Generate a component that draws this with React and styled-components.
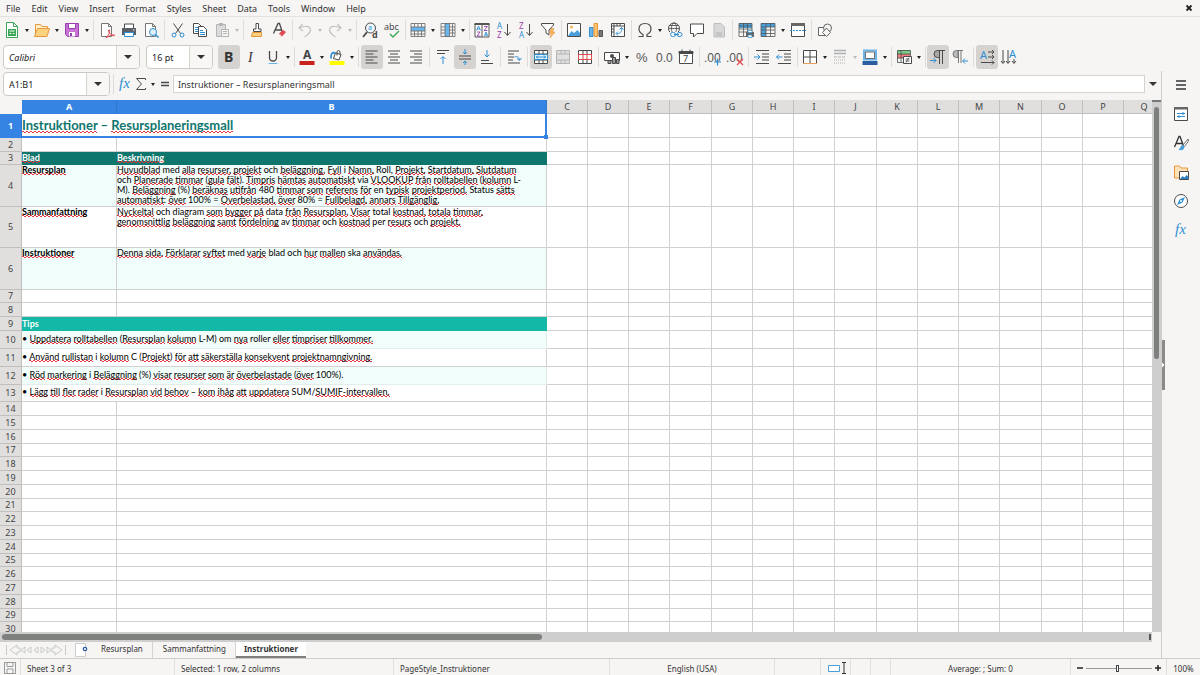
import React from "react";
import styled, { createGlobalStyle } from "styled-components";

const INK = "#4a4a4a";
const BLUE = "#2f8fd3";

// every drawing lives in an 18 x 18 box
const icons = {
  newDoc: (
    <>
      <path d="M3.5 1.5h7l4 4v11h-11z" fill="#fff" stroke="#3aa757" />
      <path d="M10.5 1.5v4h4" fill="none" stroke="#3aa757" />
      <path d="M5 8h8v7H5z" fill="#3aa757" />
      <path d="M6.5 10h5M6.5 12.5h2M10 12.5h1.5" stroke="#fff" />
    </>
  ),
  open: (
    <>
      <path d="M2.5 15V3.5h5l1.5 2h5.5V8" fill="#fff1c9" stroke="#e8963c" />
      <path d="M1.5 15.5L4.5 7.5h12l-2.5 8z" fill="#fbd37f" stroke="#e8963c" />
    </>
  ),
  save: (
    <>
      <path d="M2.5 2.5h13v13h-11l-2-2z" fill="#c774d4" stroke="#9a3fae" />
      <path d="M5.5 2.5h7v5h-7z" fill="#fff" stroke="#9a3fae" />
      <path d="M6 11h6v4.5H6z" fill="#fff" />
      <path d="M7 12h2v3H7z" fill="#9a3fae" />
    </>
  ),
  pdf: (
    <>
      <path d="M3.5 2.5h7l3 3v10h-10z" fill="#fff" stroke="#777" />
      <path d="M10.5 2.5v3h3" fill="none" stroke="#777" />
      <path d="M8 17c3-3 4-6 3.5-8-1-1-1.5 1 0 3s4 3.500 5 2.500-3-1.500-8.500 2.500z" fill="none" stroke="#e0484d" />
    </>
  ),
  print: (
    <>
      <path d="M4.5 7V3h9v4" fill="#fff" stroke={INK} />
      <path d="M2 7h14v7H2z" fill="#5b6068" />
      <path d="M4.5 11.5h9v4h-9z" fill="#fff" stroke={BLUE} />
      <path d="M13 9h1.5" stroke="#fff" />
    </>
  ),
  preview: (
    <>
      <path d="M3.5 2.5h7l3 3v10h-10z" fill="#fff" stroke="#777" />
      <path d="M10.5 2.5v3h3" fill="none" stroke="#777" />
      <circle cx="11" cy="11" r="3.5" fill="#dff0fb" stroke={BLUE} />
      <path d="M13.5 13.5l3 3" stroke={BLUE} strokeWidth="1.5" />
    </>
  ),
  cut: (
    <>
      <path d="M4.5 2.5l7 10M13.5 2.5l-7 10" stroke={INK} />
      <circle cx="5" cy="14" r="2" fill="none" stroke={BLUE} />
      <circle cx="13" cy="14" r="2" fill="none" stroke={BLUE} />
    </>
  ),
  copy: (
    <>
      <path d="M2.5 2.5h5l2.5 2.5v7.5H2.5z" fill="#fff" stroke={INK} />
      <path d="M7.5 5.5h5l3 3v7h-8z" fill="#fff" stroke={INK} />
      <path d="M4 6.5h3M4 8.5h3M4 10.5h3M9 9.5h3M9 11.5h5M9 13.5h5" stroke={BLUE} />
    </>
  ),
  paste: (
    <>
      <path d="M3.5 3.5h9v12h-9z" fill="#dcdcdc" stroke="#b5b5b5" />
      <path d="M6 2h4v3H6z" fill="#b5b5b5" />
      <path d="M8.5 8.5h7v7h-7z" fill="#f4f4f4" stroke="#b5b5b5" />
      <path d="M10 10.5h4M10 12.5h4" stroke="#b5b5b5" />
    </>
  ),
  brush: (
    <>
      <path d="M8 2.5h2.5V8H13v2.5H5.5V8H8z" fill="#fff" stroke={INK} />
      <path d="M4.5 11.5h9v4h-10z" fill="#fbd37f" stroke="#e8963c" />
    </>
  ),
  clear: (
    <>
      <path d="M3.5 12.5L8 2.5h1.5l3 9M5.5 9h6" fill="none" stroke={INK} strokeWidth="1.3" />
      <path d="M9 12.5l4-3.5 3 2-4 4.5z" fill="#e0484d" />
      <path d="M9 12.5l3 3" stroke="#f6a6a6" />
    </>
  ),
  undo: <path d="M6.5 3L3 7l4 3M3.5 7c6-3 11-2 11 2s-4 5-6 7" fill="none" stroke="#c3c3c3" strokeWidth="1.2" />,
  redo: <path d="M11.5 3L15 7l-4 3M14.5 7c-6-3-11-2-11 2s4 5 6 7" fill="none" stroke="#c3c3c3" strokeWidth="1.2" />,
  find: (
    <>
      <circle cx="9.5" cy="7" r="5" fill="#eef7fd" stroke={INK} />
      <path d="M6 11l-4 5" stroke={INK} strokeWidth="1.8" />
      <text x="7" y="9" fontSize="7" fill={BLUE}>a</text>
      <text x="11" y="16.5" fontSize="9" fontWeight="bold" fill={INK}>d</text>
    </>
  ),
  spell: (
    <>
      <text x="1" y="9" fontSize="9" fill={INK}>abc</text>
      <path d="M7 13l3 3 6-6" fill="none" stroke="#3aa757" strokeWidth="1.4" />
    </>
  ),
  rows: (
    <>
      <path d="M2 6h14v4H2z" fill="#6bb5ea" />
      <path d="M2 2.5h14v13H2zM2 6h14M2 10h14M2 13h14M5.5 2.5v3.5M9 2.5v3.5M12.5 2.5v3.5M5.5 10v5.5M9 10v5.5M12.5 10v5.5" fill="none" stroke="#666" strokeWidth="0.8" />
    </>
  ),
  cols: (
    <>
      <path d="M6 2h4.5v14H6z" fill="#6bb5ea" />
      <path d="M2 2.5h14v13H2zM6 2.5v13M10.5 2.5v13M13.5 2.5v13M2 6h4M2 9h4M2 12h4M10.5 6H16M10.5 9H16M10.5 12H16" fill="none" stroke="#666" strokeWidth="0.8" />
    </>
  ),
  sort: (
    <>
      <path d="M2 3h14v13H2zM9 3v13" fill="#fff" stroke="#555" />
      <path d="M1.5 2h15v2h-15z" fill="#555" />
      <path d="M3.5 9.5l2-4.500 2 4.500M4 8h3M11.500 15l1.500-4 1.500 4M12 14h2.500" fill="none" stroke={BLUE} strokeWidth="0.9" />
      <path d="M4 11h3l-3 4h3.500M11 5.500h3.500l-3.500 4h3.500" fill="none" stroke="#9a3fae" strokeWidth="0.9" />
    </>
  ),
  asc: (
    <>
      <text x="2" y="8" fontSize="8" fill={BLUE}>A</text>
      <text x="2" y="17" fontSize="8" fill="#9a3fae">Z</text>
      <path d="M12.5 3v11M9.5 11l3 3.5 3-3.5" fill="none" stroke={INK} />
    </>
  ),
  desc: (
    <>
      <text x="2" y="8" fontSize="8" fill="#9a3fae">Z</text>
      <text x="2" y="17" fontSize="8" fill={BLUE}>A</text>
      <path d="M12.5 3v11M9.5 11l3 3.5 3-3.5" fill="none" stroke={INK} />
    </>
  ),
  filter: (
    <>
      <path d="M2.5 2.5h12v1.5L10 9v5l-3-2V9L2.5 4z" fill="#fff" stroke={INK} />
      <path d="M12 7.5h3L13.5 11H16l-5 6 1.5-4.5h-2z" fill="#f6b35b" stroke="#e8963c" strokeWidth="0.6" />
    </>
  ),
  image: (
    <>
      <path d="M2.5 2.5h13v13h-13z" fill="#fff" stroke={INK} />
      <path d="M3 15l3.5-5 2.5 2 3.5-3 2.5 3v3z" fill="#4a9fdb" />
      <circle cx="6.5" cy="6" r="1.5" fill="#f6b35b" />
    </>
  ),
  chart: (
    <>
      <path d="M2.5 6.5H6v9H2.5z" fill="#6bb5ea" stroke={BLUE} />
      <path d="M7 2.5h3.5v13H7z" fill="#fbc36b" stroke="#e8963c" />
      <path d="M12 9.5h3.5v6H12z" fill="#777" stroke="#555" />
    </>
  ),
  pivot: (
    <>
      <path d="M2.5 2.5h13v13h-13z" fill="#fff" stroke={INK} />
      <path d="M2.5 5h13M5 2.5v13M8 2.5V5M11 2.5V5M2.5 8H5M2.5 11H5" stroke={INK} />
      <path d="M12.5 7c1 4-2 6-5 5.5M10.5 8.5l2-2 2 2M9 10.5l-2 2 2 2" fill="none" stroke={BLUE} />
    </>
  ),
  omega: (
    <path d="M2.5 15.5H7v-2C4 12 3 10 3 8c0-3.5 2.5-5.5 6-5.5s6 2 6 5.5c0 2-1 4-4 5.5v2h4.5" fill="none" stroke={INK} strokeWidth="1.2" />
  ),
  link: (
    <>
      <circle cx="8" cy="7.5" r="5.5" fill="none" stroke={INK} />
      <ellipse cx="8" cy="7.5" rx="2.5" ry="5.5" fill="none" stroke={INK} strokeWidth="0.8" />
      <path d="M2.5 7.5h11M3.5 4.5h9" stroke={INK} strokeWidth="0.8" />
      <path d="M4 11h13v5H4z" fill="#f6f5f4" />
      <rect x="4.5" y="11.5" width="5" height="4" rx="2" fill="none" stroke={BLUE} />
      <rect x="11" y="11.5" width="5" height="4" rx="2" fill="none" stroke={BLUE} />
      <path d="M8 13.5h5" stroke={BLUE} />
    </>
  ),
  comment: <path d="M2.5 3h13v9.5H9L5.5 16v-3.5h-3z" fill="#fff" stroke={INK} />,
  page: (
    <>
      <path d="M4 2.5h7l3.5 3.5v10H4z" fill="#d8d8d8" stroke="#bdbdbd" />
      <path d="M6 12h6M6 14h6" stroke="#b2b2b2" />
    </>
  ),
  printArea: (
    <>
      <path d="M2 2h13v5H2z" fill="#4a9fdb" />
      <path d="M2 2.5h13v13H2zM2 5h13M2 8h13M2 11h13M6.5 2v13M10.5 2v13" fill="none" stroke="#555" strokeWidth="0.8" />
      <path d="M9 11h8v5H9z" fill="#666" />
      <path d="M11 9.5h4v2h-4zM11 14h4v2.5h-4z" fill="#fff" stroke={BLUE} strokeWidth="0.7" />
    </>
  ),
  freeze: (
    <>
      <path d="M2 2h14v4H7v10H2z" fill="#4a9fdb" />
      <path d="M2 2.5h14v13H2zM2 6h14M7 2v14M2 9h14M2 12.5h14M11.5 2v14" fill="none" stroke="#555" strokeWidth="0.8" />
    </>
  ),
  split: (
    <>
      <path d="M2.5 2.5h13v13h-13z" fill="#fff" stroke={INK} />
      <path d="M2 2h14v3H2z" fill="#666" />
      <path d="M1 9.5h16" stroke={BLUE} strokeDasharray="2 1" />
    </>
  ),
  shapes: (
    <>
      <path d="M2.5 6.5h7v8h-7z" fill="#fff" stroke="#666" />
      <circle cx="11.5" cy="7" r="4" fill="#f6f5f4" stroke="#666" />
      <path d="M10.5 7l4 4.5-4 4-4-4z" fill="#f6f5f4" stroke="#666" />
    </>
  ),
  bold: <text x="4" y="14" fontSize="14" fontWeight="bold" fill="#333">B</text>,
  italic: <text x="6" y="14" fontSize="14" fontStyle="italic" fontFamily="Liberation Serif, serif" fill="#333">I</text>,
  underline: (
    <>
      <path d="M5.5 3v6.5q0 3.5 3.5 3.5t3.5-3.5V3" fill="none" stroke={INK} strokeWidth="1.3" />
      <path d="M4.5 15.5h9" stroke="#6bb5ea" />
    </>
  ),
  fontColor: (
    <>
      <text x="5" y="11" fontSize="12" fontWeight="bold" fill="#444">A</text>
      <path d="M1.5 13h15v4h-15z" fill="#c9211e" />
    </>
  ),
  highlight: (
    <>
      <path d="M7.5 5l5.500 1.500-2 5.500-5.500-1.500z" fill="#fff" stroke={INK} />
      <path d="M9 7.500V3.500q1.500-2 3 0v3" fill="none" stroke={INK} />
      <path d="M7.500 5C4 4 2.500 6 3 10.500" fill="none" stroke={BLUE} strokeWidth="1.800" />
      <path d="M1.5 13h15v4h-15z" fill="#ffff00" />
    </>
  ),
  alignLeft: <path d="M2.5 3h12M2.5 6h8M2.5 9h12M2.5 12h8M2.5 15h12" stroke={INK} />,
  alignCenter: <path d="M3 3h12M5 6h8M3 9h12M5 12h8M3 15h12" stroke={INK} />,
  alignRight: <path d="M3 3h12M7 6h8M3 9h12M7 12h8M3 15h12" stroke={INK} />,
  alignTop: (
    <>
      <path d="M3 2.5h12M3 5.5h8" stroke={INK} />
      <path d="M9 16V9M6.5 11L9 8.5l2.5 2.5" fill="none" stroke={BLUE} />
    </>
  ),
  alignMiddle: (
    <>
      <path d="M3 8h12M3 11h12" stroke={INK} />
      <path d="M9 1v5M7 4l2 2 2-2M9 17v-4M7 15l2-2 2 2" fill="none" stroke={BLUE} />
    </>
  ),
  alignBottom: (
    <>
      <path d="M3 12.5h8M3 15.5h12" stroke={INK} />
      <path d="M9 2v7M6.5 6.5L9 9l2.5-2.5" fill="none" stroke={BLUE} />
    </>
  ),
  wrap: (
    <>
      <path d="M3 3h11M3 6h6M3 9h6M3 12h5M3 15h12" stroke={INK} />
      <path d="M9.5 9c3-1 4.5 0 5 3M12 10.5l2.5 2 2-2.5" fill="none" stroke={BLUE} />
    </>
  ),
  mergeCenter: (
    <>
      <path d="M2.5 2.5h13v13h-13zM2 6h14M2 12h14M7 2.5V6M11 2.5V6M7 12v3.5M11 12v3.5" fill="#fff" stroke={INK} />
      <path d="M2.5 6.5h13v5h-13z" fill="#e5f3fc" stroke={BLUE} />
      <path d="M4 9h10M6 7.5L4.5 9 6 10.5M12 7.5L13.5 9 12 10.5" fill="none" stroke={BLUE} />
    </>
  ),
  merge: (
    <path d="M2.5 2.5h13v13h-13zM2 6h14M2 12h14M7 2.5V6M11 2.5V6M7 12v3.5M11 12v3.5" fill="#e0e0e0" stroke="#b5b5b5" />
  ),
  unmerge: (
    <>
      <path d="M2.5 2.5h13v13h-13zM7 2.5v13M11 2.5v13" fill="#fff" stroke={INK} />
      <path d="M2.5 6.5h13v5h-13zM7 6.5v5M11 6.5v5" fill="#fff" stroke="#e0484d" />
    </>
  ),
  currency: (
    <>
      <path d="M1.500 4.500h15v8h-15z" fill="#fff" stroke={INK} />
      <circle cx="9" cy="8" r="2" fill={INK} />
      <path d="M5 12.500h3v3H5zM9.500 9.500h3v6h-3zM13.500 11.500H16v4h-2.500z" fill="#999" stroke={INK} />
    </>
  ),
  percent: <text x="3" y="14" fontSize="13" fontFamily="Liberation Sans, sans-serif" fill="#555">%</text>,
  number: <text x="1" y="14" fontSize="12" fontFamily="Liberation Sans, sans-serif" fill="#555">0.0</text>,
  date: (
    <>
      <path d="M2.5 3.5h13v12h-13z" fill="#fff" stroke={INK} />
      <path d="M2 3.5h14v2H2zM5 1.5v3M13 1.5v3" fill={INK} stroke={INK} />
      <text x="6" y="14" fontSize="9" fill="#444">7</text>
    </>
  ),
  addDecimal: (
    <>
      <text x="0" y="14" fontSize="12" fontFamily="Liberation Sans, sans-serif" fill="#555">.00</text>
      <path d="M10 14h7M13.5 10.5v7" stroke={BLUE} strokeWidth="1.2" />
    </>
  ),
  delDecimal: (
    <>
      <text x="0" y="14" fontSize="12" fontFamily="Liberation Sans, sans-serif" fill="#555">.00</text>
      <path d="M11 11l6 6M17 11l-6 6" stroke="#e0484d" strokeWidth="1.2" />
    </>
  ),
  indent: (
    <>
      <path d="M3 2.5h13M9 6h7M9 9h7M9 12h7M3 15.5h13" stroke={INK} />
      <path d="M1 9h6M4.5 6.5L7 9l-2.5 2.5" fill="none" stroke={BLUE} />
    </>
  ),
  outdent: (
    <>
      <path d="M3 2.5h13M9 6h7M9 9h7M9 12h7M3 15.5h13" stroke={INK} />
      <path d="M7.5 9h-6M4 6.5L1.5 9 4 11.5" fill="none" stroke={BLUE} />
    </>
  ),
  borders: (
    <>
      <path d="M2.5 2.5h13v13h-13zM9 2.5v13M2.5 9h13" fill="#fff" stroke={INK} />
      <path d="M2 15.5h14" stroke="#e8a05c" />
    </>
  ),
  borderStyle: (
    <>
      <path d="M3 2.500h12M3 5.500h12" stroke="#b0b0b0" strokeWidth="1.500" />
      <path d="M3 9h12" stroke="#b0b0b0" strokeDasharray="3 1" />
      <path d="M3 12h12M3 15h12" stroke="#b0b0b0" strokeDasharray="1 1" />
    </>
  ),
  borderColor: (
    <>
      <path d="M3 2.500h12v9H3z" fill="#fff" stroke="#6bb5ea" strokeWidth="2" />
      <path d="M4.500 4h9v6.500h-9z" fill="#fff" stroke={INK} strokeWidth="0.800" />
      <path d="M1.5 13h15v4h-15z" fill="#2a5ea0" />
    </>
  ),
  conditional: (
    <>
      <path d="M2 2h13v4H2z" fill="#7ccf8a" />
      <path d="M2 6h13v4H2z" fill="#f08080" />
      <path d="M2.5 2.5h13v12h-13zM2 6h13M2 10h13M6 2v12" fill="none" stroke={INK} strokeWidth="0.8" />
      <path d="M8.5 8.5h8v7h-8z" fill="#fff" stroke={INK} />
      <path d="M10.5 11h4M10.5 13h4M14 9.5l-3 5" stroke={INK} strokeWidth="0.8" />
    </>
  ),
  ltr: (
    <>
      <path d="M10.500 2.500H8.500a3.500 3.500 0 0 0 0 7h2z" fill="#a9a7a4" stroke={INK} />
      <path d="M10 2.500h6M10.500 2.500v13.500M13.500 2.500v13.500" fill="none" stroke={INK} />
      <path d="M1 12.5h6M4.5 10L7 12.5 4.5 15" fill="none" stroke={BLUE} />
    </>
  ),
  rtl: (
    <>
      <path d="M7 2.500H5.500a3 3 0 0 0 0 7H7z" fill="#bbb" stroke="#777" />
      <path d="M7 2.500h5M7.500 2.500V15M10 2.500V15" fill="none" stroke="#777" />
      <path d="M17 13h-5M14 10.500L11.500 13l2.500 2.500" fill="none" stroke={BLUE} />
    </>
  ),
  textRight: (
    <>
      <text x="2" y="11" fontSize="11" fill={BLUE}>A</text>
      <path d="M10 4h6M14 2l2 2-2 2M10 9h6M14 7l2 2-2 2M3 14.5h13M14 12.5l2 2-2 2" fill="none" stroke={INK} />
    </>
  ),
  textDown: (
    <>
      <text x="9" y="10" fontSize="11" fill={BLUE}>A</text>
      <path d="M3 2v13M1 13l2 2.5L5 13M8 2v13M6 13l2 2.5 2-2.5M14 11v4M12 13l2 2.5 2-2.5" fill="none" stroke={INK} />
    </>
  ),
  fx: (
    <text x="3" y="13" fontSize="15" fontStyle="italic" fontFamily="Liberation Serif, serif" fill={BLUE}>
      fx
    </text>
  ),
  sum: <path d="M13.5 5V3.5h-9L9.5 9l-5 5.5h9V13" fill="none" stroke={INK} />,
  equals: <path d="M5 7.5h8M5 10.5h8" stroke={INK} strokeWidth="1.5" />,
  menu: <path d="M4 5h10M4 9h10M4 13h10" stroke="#333" strokeWidth="1.5" />,
  properties: (
    <>
      <path d="M2.5 2.5h13v13h-13z" fill="#fff" stroke={INK} />
      <path d="M2 2h14v2.5H2z" fill="#666" />
      <path d="M5 8.500h8M5 11.500h8M11 7v3M7 10v3" stroke={BLUE} />
    </>
  ),
  styles: (
    <>
      <path d="M2.5 13L7 2.5h1L11.5 12M4 9.5h6" fill="none" stroke="#333" strokeWidth="1.3" />
      <path d="M16 5l-5 6 1.5 1.5L16.5 7z" fill="#fff" stroke={INK} strokeWidth="0.8" />
      <path d="M11 11c-3 0-2 4-5 4.5 3 1.5 6 1 6.5-3z" fill="#4a9fdb" />
    </>
  ),
  gallery: (
    <>
      <path d="M2.5 15V3h5l1.5 2h6.5v10z" fill="#fde2b8" stroke="#e8963c" />
      <path d="M7.5 8.5h9v8h-9z" fill="#fff" stroke={INK} />
      <path d="M8 16l2.5-3 2 1.5 2-2.5 2 2v2z" fill="#2f7fc3" />
    </>
  ),
  navigator: (
    <>
      <circle cx="9" cy="9" r="6.5" fill="#fff" stroke={INK} />
      <path d="M13 5l-2.5 5.5L5 13l2.5-5.5z" fill={BLUE} />
      <circle cx="9" cy="9" r="1" fill="#fff" />
    </>
  ),
  saved: (
    <>
      <path d="M3.5 3.5h11v11h-11z" fill="#f6f6f6" stroke="#999" />
      <path d="M6 3.5v4h6v-4M6 14.5V10h6v4.5" fill="none" stroke="#999" />
    </>
  ),
};

// [icon, label, has a menu, state]; a number is a separator of that width
const mainTools = [
  ["newDoc", "New", true], ["open", "Open", true], ["save", "Save", true], 5,
  ["pdf", "Export PDF"], ["print", "Print"], ["preview", "Print preview"], 5,
  ["cut", "Cut"], ["copy", "Copy"], ["paste", "Paste", true, "off"], 5,
  ["brush", "Clone formatting"], ["clear", "Clear formatting"], 4,
  ["undo", "Undo", true, "off"], ["redo", "Redo", true, "off"], 5,
  ["find", "Find"], ["spell", "Spelling"], 4,
  ["rows", "Row", true], ["cols", "Column", true], 4,
  ["sort", "Sort"], ["asc", "Sort ascending"], ["desc", "Sort descending"], ["filter", "AutoFilter"], 4,
  ["image", "Image"], ["chart", "Chart"], ["pivot", "Pivot table"], 5,
  ["omega", "Special character", true], ["link", "Hyperlink"], ["comment", "Comment"], ["page", "Headers and footers"], 5,
  ["printArea", "Print area"], ["freeze", "Freeze", true], ["split", "Split window"], 5,
  ["shapes", "Draw functions"],
];

const formatTools = [
  ["bold", "Bold", false, "on"], ["italic", "Italic"], ["underline", "Underline", true], 4,
  ["fontColor", "Font colour", true], ["highlight", "Background colour", true], 5,
  ["alignLeft", "Align left", false, "on"], ["alignCenter", "Align centre"], ["alignRight", "Align right"], 5,
  ["alignTop", "Align top"], ["alignMiddle", "Centre vertically", false, "on"], ["alignBottom", "Align bottom"], 5,
  ["wrap", "Wrap text"], 5,
  ["mergeCenter", "Merge and centre", false, "on"], ["merge", "Merge"], ["unmerge", "Split cells"], 5,
  ["currency", "Currency", true], ["percent", "Percent"], ["number", "Number"], ["date", "Date"], 5,
  ["addDecimal", "Add decimal"], ["delDecimal", "Delete decimal"], 5,
  ["indent", "Increase indent"], ["outdent", "Decrease indent"], 4,
  ["borders", "Borders", true], ["borderStyle", "Border style", true, "off"], ["borderColor", "Border colour", true], 4,
  ["conditional", "Conditional", true], 4,
  ["ltr", "Left to right", false, "on"], ["rtl", "Right to left"], 5,
  ["textRight", "Text horizontal", false, "on"], ["textDown", "Text vertical"],
];

const sideTools = [
  ["menu", "Sidebar settings"],
  ["properties", "Properties"],
  ["styles", "Styles"],
  ["gallery", "Gallery"],
  ["navigator", "Navigator"],
  ["fx", "Functions"],
];

const menus = ["File", "Edit", "View", "Insert", "Format", "Styles", "Sheet", "Data", "Tools", "Window", "Help"];

const columns = "ABCDEFGHIJKLMNOPQ".split("");
const colWidth = (i) => (i === 0 ? 95 : i === 1 ? 430 : i % 4 === 1 ? 42 : 41);

// words between underscores get the spelling mark
const rows = {
  1: { h: 24, kind: "title", merged: "_Instruktioner_ – _Resursplaneringsmall_" },
  3: { h: 13, kind: "head", a: "_Blad_", b: ["_Beskrivning_"] },
  4: {
    h: 42,
    kind: "tint",
    a: "_Resursplan_",
    b: [
      "_Huvudblad_ med _alla_ _resurser,_ _projekt_ och _beläggning._ _Fyll_ i _Namn,_ Roll, _Projekt,_ _Startdatum,_ _Slutdatum_",
      "och _Planerade_ _timmar_ (_gula_ _fält_). _Timpris_ _hämtas_ _automatiskt_ via _VLOOKUP_ _från_ _rolltabellen_ (_kolumn_ L-",
      "M). _Beläggning_ (%) _beräknas_ _utifrån_ 480 _timmar_ _som_ _referens_ _för_ en _typisk_ _projektperiod._ Status _sätts_",
      "_automatiskt_: _över_ 100% = _Överbelastad,_ _över_ 80% = _Fullbelagd,_ _annars_ _Tillgänglig._",
    ],
  },
  5: {
    h: 41,
    kind: "plain",
    a: "_Sammanfattning_",
    b: [
      "_Nyckeltal_ och diagram _som_ _bygger_ _på_ data _från_ _Resursplan._ _Visar_ total _kostnad,_ _totala_ _timmar,_",
      "_genomsnittlig_ _beläggning_ _samt_ _fördelning_ av _timmar_ och _kostnad_ per _resurs_ och _projekt._",
    ],
  },
  6: {
    h: 42,
    kind: "tint",
    a: "_Instruktioner_",
    b: ["_Denna_ _sida._ _Förklarar_ _syftet_ med _varje_ blad och _hur_ _mallen_ ska _användas._"],
  },
  7: { h: 13 },
  9: { h: 14, kind: "tips", merged: "Tips" },
  10: { h: 18, kind: "tipTint", merged: "• _Uppdatera_ _rolltabellen_ (_Resursplan_ _kolumn_ L-M) om _nya_ roller _eller_ _timpriser_ _tillkommer._" },
  11: { h: 18, kind: "tip", merged: "• _Använd_ _rullistan_ i _kolumn_ C (_Projekt_) _för_ _att_ _säkerställa_ _konsekvent_ _projektnamngivning._" },
  12: { h: 18, kind: "tipTint", merged: "• _Röd_ _markering_ i _Beläggning_ (%) _visar_ _resurser_ _som_ _är_ _överbelastade_ (_över_ 100%)." },
  13: { h: 17, kind: "tip", merged: "• _Lägg_ _till_ _fler_ _rader_ i _Resursplan_ _vid_ _behov_ – _kom_ _ihåg_ _att_ _uppdatera_ SUM/_SUMIF-intervallen._" },
};
const rowHeight = (n) => rows[n]?.h ?? (n > 14 && n % 4 === 1 ? 13 : 14);

const Marked = ({ text }) =>
  text.split("_").map((part, i) => (i % 2 ? <Misspelled key={i}>{part}</Misspelled> : part));

const Icon = ({ name }) => (
  <Svg viewBox="0 0 18 18" aria-hidden="true">
    {icons[name]}
  </Svg>
);

const Tools = ({ items }) =>
  items.map((item, i) => {
    if (typeof item === "number") return <Separator key={i} $w={item} />;
    const [name, label, drop, state] = item;
    return (
      <React.Fragment key={name}>
        <ToolButton aria-label={label} $on={state === "on"}>
          <Icon name={name} />
        </ToolButton>
        {drop && <DropButton aria-label={`${label} options`} $off={state === "off"} />}
      </React.Fragment>
    );
  });

const Combo = ({ label, value, width, italic }) => (
  <ComboBox $w={width}>
    <ComboInput aria-label={label} defaultValue={value} $italic={italic} />
    <ComboArrow aria-label={`${label} list`} />
  </ComboBox>
);

const SheetRow = ({ n }) => {
  const row = rows[n] || {};
  return (
    <tr>
      <RowHead scope="row" $h={rowHeight(n)} $active={n === 1}>
        {n}
      </RowHead>
      {row.merged ? (
        <Cell colSpan={2} $kind={row.kind}>
          <Marked text={row.merged} />
          {n === 1 && <FillHandle />}
        </Cell>
      ) : (
        <>
          <Cell $kind={row.kind} $strong>
            {row.a && <Marked text={row.a} />}
          </Cell>
          <Cell $kind={row.kind}>
            {row.b?.map((line) => (
              <Line key={line}>
                <Marked text={line} />
              </Line>
            ))}
          </Cell>
        </>
      )}
      {columns.slice(2).map((c) => (
        <Cell key={c} />
      ))}
    </tr>
  );
};

const App = () => (
  <Window>
    <Global />
    <MenuBar>
      {menus.map((m) => (
        <MenuItem key={m}>{m}</MenuItem>
      ))}
      <CloseButton aria-label="Close document">
        <svg viewBox="0 0 8 8" width="8" height="8">
          <path d="M1.5 1.5l5 5M6.5 1.5l-5 5" stroke="#222" strokeWidth="1.8" />
        </svg>
      </CloseButton>
    </MenuBar>
    <Toolbar>
      <Tools items={mainTools} />
    </Toolbar>
    <Toolbar>
      <Combos>
        <Combo label="Font name" value="Calibri" width={137} italic />
        <Combo label="Font size" value="16 pt" width={67} />
      </Combos>
      <Tools items={formatTools} />
    </Toolbar>
    <Body>
      <Main>
        <FormulaBar>
          <Combo label="Name box" value="A1:B1" width={107} />
          <Separator $w={7} />
          <ToolButton aria-label="Function wizard" $narrow>
            <Icon name="fx" />
          </ToolButton>
          <ToolButton aria-label="Select function" $narrow>
            <Icon name="sum" />
          </ToolButton>
          <DropButton aria-label="Function list" />
          <ToolButton aria-label="Formula" $narrow>
            <Icon name="equals" />
          </ToolButton>
          <FormulaInput aria-label="Input line" defaultValue="Instruktioner – Resursplaneringsmall" />
          <ExpandButton aria-label="Expand formula bar" />
        </FormulaBar>
        <SheetArea>
          <GridPane>
            <Grid>
              <colgroup>
                <Col $w={22} />
                {columns.map((c, i) => (
                  <Col key={c} $w={colWidth(i)} />
                ))}
              </colgroup>
              <thead>
                <tr>
                  <Corner />
                  {columns.map((c, i) => (
                    <ColHead key={c} scope="col" $active={i < 2}>
                      {c}
                    </ColHead>
                  ))}
                </tr>
              </thead>
              <tbody>
                {Array.from({ length: 30 }, (_, i) => (
                  <SheetRow key={i} n={i + 1} />
                ))}
              </tbody>
            </Grid>
          </GridPane>
          <VScroll>
            <VThumb />
          </VScroll>
        </SheetArea>
        <HScroll>
          <HThumb />
          <SplitGrip />
        </HScroll>
        <TabBar>
          <NavButtons viewBox="0 0 62 14" aria-hidden="true">
            <path
              d="M1.5 2v10M12 2L5 7l7 5V9h3V5h-3zM20 4v6l-4-3zM26 4v6l-4-3zM33 4v6l-4-3zM36 4l4 3-4 3zM42 4l4 3-4 3zM50 2l7 5-7 5V9h-3V5h3zM60.5 2v10"
              fill="none"
              stroke="#c9c9c9"
            />
          </NavButtons>
          <AddSheet aria-label="Add sheet">
            <svg viewBox="0 0 14 16" width="14" height="16">
              <path d="M1.5 1.5h10v13h-10z" fill="#fff" stroke="#ccc" />
              <circle cx="11" cy="7" r="1.700" fill="#fff" stroke="#2a5ea0" strokeWidth="1.3" />
            </svg>
          </AddSheet>
          <Tab>Resursplan</Tab>
          <Tab $line>Sammanfattning</Tab>
          <Tab $line $active>
            Instruktioner
          </Tab>
        </TabBar>
      </Main>
      <Grip aria-label="Toggle sidebar">
        <svg viewBox="0 0 4 8" width="4" height="8">
          <path d="M1 1.500L3.500 4 1 6.500z" fill="#fff" />
        </svg>
      </Grip>
      <SideBar>
        {sideTools.map(([name, label]) => (
          <ToolButton key={name} aria-label={label}>
            <Icon name={name} />
          </ToolButton>
        ))}
      </SideBar>
    </Body>
    <StatusBar>
      <Status $center>
        <Icon name="saved" />
      </Status>
      <Status>Sheet 3 of 3</Status>
      <Status>Selected: 1 row, 2 columns</Status>
      <Status>PageStyle_Instruktioner</Status>
      <Status $center>English (USA)</Status>
      <Status />
      <Status>
        <svg viewBox="0 0 20 14" width="20" height="14" aria-hidden="true">
          <path d="M1.5 4.5h11v6h-11z" fill="#fff" stroke="#4a9fdb" />
          <path d="M15 1.5h4M15 12.5h4M17 1.5v11" stroke="#333" />
        </svg>
      </Status>
      <Status />
      <Status />
      <Status $center>Average: ; Sum: 0</Status>
      <Status $center>
        <ZoomButton aria-label="Zoom out">
          <svg viewBox="0 0 8 8" width="8" height="8">
            <path d="M1 4h6" stroke="#222" strokeWidth="1.5" />
          </svg>
        </ZoomButton>
        <ZoomSlider type="range" aria-label="Zoom" min="0" max="200" defaultValue="97" />
        <ZoomButton aria-label="Zoom in">
          <svg viewBox="0 0 8 8" width="8" height="8">
            <path d="M1 4h6M4 1v6" stroke="#222" strokeWidth="1.5" />
          </svg>
        </ZoomButton>
      </Status>
      <Status $center>100%</Status>
    </StatusBar>
  </Window>
);

export default App;

const Global = createGlobalStyle`
  * {
    box-sizing: border-box;
  }
  body {
    margin: 0;
    background: #f6f5f4;
    color: #333;
    font-family: "Noto Sans", sans-serif;
    font-size: 9px;
  }
  button, input {
    margin: 0;
    padding: 0;
    border: 0;
    background: none;
    color: inherit;
    font: inherit;
  }
`;
const Window = styled.div`
  display: flex;
  flex-direction: column;
  height: 100vh;
  overflow: hidden;
`;
const Svg = styled.svg`
  display: block;
  flex: none;
  width: 18px;
  height: 18px;
  overflow: visible;
`;
const MenuBar = styled.nav`
  display: flex;
  gap: 11px;
  height: 17px;
  padding: 0 6px;
  border-bottom: 1px solid #e4e2e0;
`;
const MenuItem = styled.button`
  white-space: nowrap;
`;
const CloseButton = styled.button`
  display: flex;
  align-items: center;
  margin-left: auto;
  padding-right: 1px;
`;
const Toolbar = styled.div`
  display: flex;
  align-items: center;
  height: 27px;
  padding: 0 0 1px 1px;
`;
const Combos = styled.div`
  display: flex;
  gap: 6px;
  padding: 0 5px 0 2px;
`;
const ToolButton = styled.button`
  display: flex;
  flex: none;
  align-items: center;
  justify-content: center;
  width: ${(p) => (p.$narrow ? 16 : 22)}px;
  height: 24px;
  border-radius: 3px;
  background: ${(p) => (p.$on ? "#d5d2cf" : "none")};
`;
const DropButton = styled.button`
  display: flex;
  flex: none;
  align-items: center;
  justify-content: center;
  width: 8px;
  height: 24px;
  &::after {
    content: "";
    border: 2px solid transparent;
    border-top: 3px solid ${(p) => (p.$off ? "#bbb" : "#222")};
    border-bottom: 0;
  }
`;
const Separator = styled.span`
  flex: none;
  width: ${(p) => p.$w}px;
  height: 20px;
  background: linear-gradient(#dedcda, #dedcda) center / 1px 100% no-repeat;
`;
const ComboBox = styled.div`
  display: flex;
  flex: none;
  width: ${(p) => p.$w}px;
  height: 24px;
  border: 1px solid #cdc9c5;
  border-radius: 4px;
  background: #fff;
  overflow: hidden;
`;
const ComboInput = styled.input`
  flex: 1;
  min-width: 0;
  padding-left: 5px;
  color: #222;
  font-style: ${(p) => (p.$italic ? "italic" : "normal")};
`;
const ComboArrow = styled.button`
  display: flex;
  align-items: center;
  justify-content: center;
  width: 23px;
  border-left: 1px solid #d8d4d0;
  background: #f8f7f6;
  &::after {
    content: "";
    border: 4px solid transparent;
    border-top-color: #333;
    border-bottom: 0;
  }
`;
const Body = styled.div`
  display: flex;
  flex: 1;
  min-height: 0;
`;
const Main = styled.main`
  display: flex;
  flex: 1;
  flex-direction: column;
  min-width: 0;
`;
const FormulaBar = styled.div`
  display: flex;
  align-items: center;
  height: 29px;
  padding: 0 0 3px 3px;
`;
const FormulaInput = styled.input`
  flex: 1;
  height: 18px;
  padding-left: 4px;
  border: 1px solid #d5d2cf;
  background: #fff;
`;
const ExpandButton = styled(ComboArrow)`
  width: 16px;
  border: 0;
  background: none;
`;
const SheetArea = styled.div`
  display: flex;
  flex: 1;
  min-height: 0;
`;
const GridPane = styled.div`
  flex: 1;
  min-width: 0;
  overflow: hidden;
  background: #fff;
`;
const Grid = styled.table`
  width: 0;
  table-layout: fixed;
  border-spacing: 0;
`;
const Col = styled.col`
  width: ${(p) => p.$w}px;
`;
const Corner = styled.td`
  height: 14px;
  padding: 0;
  background: #f6f5f4;
`;
const ColHead = styled.th`
  padding: 0;
  border-right: 1px solid ${(p) => (p.$active ? "#2f76cc" : "#c0bfbe")};
  border-bottom: 1px solid ${(p) => (p.$active ? "#3584e4" : "#c0bfbe")};
  background: ${(p) => (p.$active ? "#3584e4" : "#e0dfde")};
  color: ${(p) => (p.$active ? "#fff" : "#444")};
  font-weight: ${(p) => (p.$active ? 700 : 400)};
  line-height: 12px;
`;
const RowHead = styled(ColHead)`
  height: ${(p) => p.$h}px;
`;
const fills = {
  head: "#0f766e",
  tint: "#f0fdfa",
  tipTint: "#f0fdfa",
  tips: "#14b8a6",
};
const Cell = styled.td`
  position: relative;
  padding: 0;
  border-right: 1px solid #d0d0d0;
  border-bottom: 1px solid #d0d0d0;
  background: ${(p) => fills[p.$kind] || "#fff"};
  color: #000;
  font-family: Lato, sans-serif;
  font-size: 9px;
  font-weight: ${(p) => (p.$strong ? 700 : 400)};
  line-height: 10px;
  white-space: nowrap;
  vertical-align: ${(p) => (["tint", "plain"].includes(p.$kind) ? "top" : "middle")};
  ${(p) =>
    p.$kind === "title" &&
    `
    border-right: 2px solid #3584e4;
    border-bottom: 2px solid #3584e4;
    color: #0f766e;
    font-size: 13px;
    font-weight: 700;
    line-height: 20px;
  `}
  ${(p) =>
    (p.$kind === "head" || p.$kind === "tips") &&
    `
    border-color: ${fills[p.$kind]};
    color: #fff;
    font-weight: 700;
  `}
  ${(p) => ["tip", "tipTint"].includes(p.$kind) && "padding-bottom: 2px;"}
  ${(p) => p.$kind === "tipTint" && "border-color: #e2eeeb;"}
`;
const Line = styled.div`
  height: 10px;
`;
// tight zigzag drawn over the descenders
const Misspelled = styled.span`
  background-image: linear-gradient(45deg, transparent 35%, #e0383e 35%, #e0383e 65%, transparent 65%),
    linear-gradient(135deg, transparent 35%, #e0383e 35%, #e0383e 65%, transparent 65%);
  background-position: 0 100%, 2px 100%;
  background-size: 4px 2px;
  background-repeat: repeat-x;
`;
const FillHandle = styled.span`
  position: absolute;
  right: -3px;
  bottom: -3px;
  z-index: 1;
  width: 4px;
  height: 4px;
  background: #3584e4;
`;
const VScroll = styled.div`
  width: 9px;
  padding: 5px 2px 0;
  border-top: 2px solid #777;
  background: #cecece;
`;
const VThumb = styled.div`
  height: 48%;
  border-radius: 3px;
  background: #7e807e;
`;
const HScroll = styled.div`
  display: flex;
  align-items: center;
  justify-content: space-between;
  height: 10px;
  margin-right: 9px;
  padding: 0 1px 0 2px;
  background: #cecece;
`;
const HThumb = styled.div`
  width: 47%;
  height: 6px;
  border-radius: 3px;
  background: #7e807e;
`;
const SplitGrip = styled.div`
  width: 2px;
  height: 6px;
  background: #555;
`;
const TabBar = styled.div`
  display: flex;
  align-items: center;
  height: 16px;
  padding-left: 5px;
  font-size: 8px;
`;
const NavButtons = styled.svg`
  flex: none;
  width: 62px;
  height: 14px;
`;
const AddSheet = styled.button`
  display: flex;
  margin: 0 3px 0 7px;
`;
const Tab = styled.button`
  height: 16px;
  padding: 0 ${(p) => (p.$active ? 8 : 10)}px;
  border-bottom: 2px solid ${(p) => (p.$active ? "#7e807e" : "transparent")};
  background: ${(p) => (p.$active ? "#fff" : "none")};
  box-shadow: ${(p) => (p.$line ? "-1px 0 #d5d2cf" : "none")};
  font-weight: ${(p) => (p.$active ? 700 : 400)};
  line-height: 14px;
`;
const Grip = styled.button`
  display: flex;
  align-items: center;
  align-self: center;
  width: 4px;
  height: 50px;
  margin-right: -4px;
  background: #8a8a8a;
`;
const SideBar = styled.aside`
  display: flex;
  flex-direction: column;
  align-items: center;
  gap: 5px;
  width: 39px;
  padding-top: 2px;
  border-left: 1px solid #cfccc9;
`;
const StatusBar = styled.footer`
  display: grid;
  grid-template-columns: 21px 154fr 219fr 216fr 165fr 46fr 30px 20px 20px 180fr 96px 33px;
  height: 17px;
  padding-bottom: 1px;
  border-top: 1px solid #cfccc9;
  font-size: 8px;
`;
const Status = styled.div`
  display: flex;
  align-items: center;
  justify-content: ${(p) => (p.$center ? "center" : "flex-start")};
  min-width: 0;
  padding-left: ${(p) => (p.$center ? 0 : 6)}px;
  border-right: 1px solid #e2e0de;
  white-space: nowrap;
  &:last-child {
    border-right: 0;
  }
`;
const ZoomButton = styled.button`
  display: flex;
  flex: none;
`;
const ZoomSlider = styled.input`
  appearance: none;
  width: 66px;
  margin: 0 2px;
  height: 8px;
  background: linear-gradient(#999, #999) center / 100% 1px no-repeat;
  &::-webkit-slider-thumb {
    appearance: none;
    width: 3px;
    height: 7px;
    border: 1px solid #444;
    background: #fff;
  }
`;
